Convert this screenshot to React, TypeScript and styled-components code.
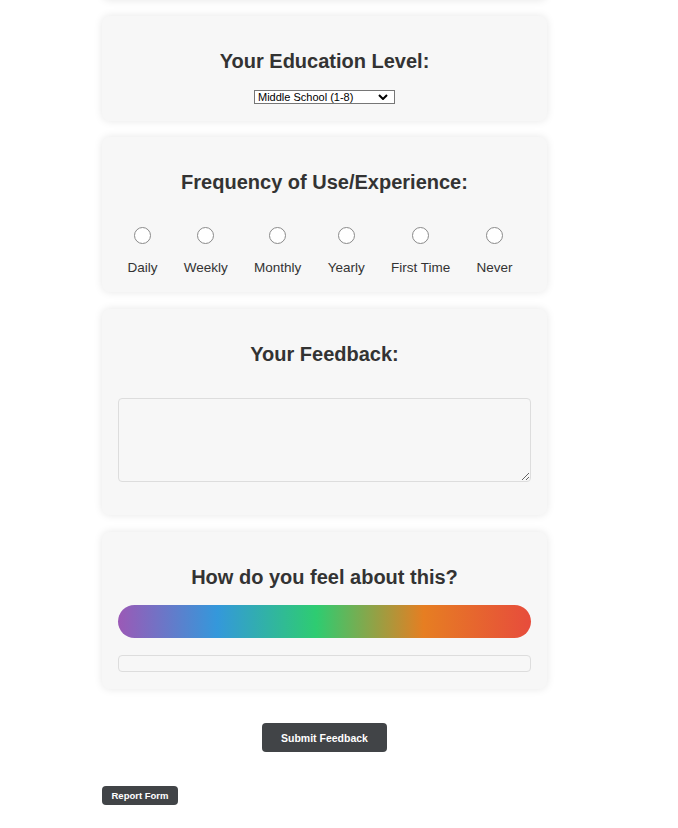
import React from "react";
import styled, { createGlobalStyle } from "styled-components";

const Global = createGlobalStyle`
  html, body { margin: 0; padding: 0; background: #ffffff; }
  body { font-family: "Liberation Sans", Arial, sans-serif; color: #333; }
`;

const Page = styled.div`
  width: 445px;
  margin-left: 102px;
  display: flex;
  flex-direction: column;
`;

const Card = styled.section<{ $pb?: number; $mb?: number }>`
  background: #f7f7f7;
  border-radius: 8px;
  box-shadow: 0 0 8px rgba(0, 0, 0, 0.1);
  padding: 20px 16px ${(p) => p.$pb ?? 17}px;
  margin-bottom: ${(p) => p.$mb ?? 16}px;
  display: flex;
  flex-direction: column;
  align-items: center;
`;

const HiddenCard = styled(Card)`
  height: 60px;
  margin-top: -60px;
  padding: 0;
`;

const Title = styled.h2<{ $mb: number }>`
  margin: 14px 0 ${(p) => p.$mb}px;
  font-size: 20px;
  line-height: 23px;
  font-weight: bold;
  color: #333;
  text-align: center;
`;

const SelectWrap = styled.div`
  position: relative;
  width: 141px;
  height: 14px;
`;

const Select = styled.select`
  width: 141px;
  height: 14px;
  font-family: "Liberation Sans", Arial, sans-serif;
  font-size: 11px;
  padding: 0 0 0 3px;
  border: 1px solid #767676;
  border-radius: 0;
  background: #fff;
  color: #000;
  box-sizing: border-box;
  line-height: 12px;
  appearance: none;
  display: block;
`;

const Chevron = styled.svg`
  position: absolute;
  right: 7px;
  top: 4px;
  pointer-events: none;
`;

const Options = styled.div`
  display: flex;
  gap: 26.3px;
  justify-content: center;
  margin-left: -9px;
`;

const Option = styled.label`
  display: flex;
  flex-direction: column;
  align-items: center;
  gap: 16px;
  font-size: 13.5px;
  line-height: 16px;
  color: #333;
`;

const Radio = styled.input.attrs({ type: "radio" })`
  width: 17px;
  height: 17px;
  margin: 0;
  appearance: none;
  border: 1px solid #8a8a8a;
  border-radius: 50%;
  background: #fff;
  box-sizing: border-box;
`;

const TextArea = styled.textarea`
  width: 413px;
  height: 84px;
  box-sizing: border-box;
  border: 1px solid #ddd;
  border-radius: 4px;
  background: #f7f7f7;
  align-self: center;
  margin-top: 8px;
  resize: vertical;
`;

const Gradient = styled.div`
  width: 413px;
  height: 33px;
  border-radius: 17px;
  background: linear-gradient(
    to right,
    #9b59b6 0%,
    #3498db 24%,
    #2ecc71 48%,
    #e67e22 74%,
    #e74c3c 100%
  );
`;

const EmptyBox = styled.div`
  width: 413px;
  height: 17px;
  box-sizing: border-box;
  border: 1px solid #ddd;
  border-radius: 4px;
  margin-top: 17px;
`;

const Actions = styled.div`
  display: flex;
  justify-content: center;
  margin-top: 18px;
`;

const DarkButton = styled.button<{ $small?: boolean }>`
  background: #414447;
  color: #fff;
  border: none;
  border-radius: 4px;
  font-family: "Liberation Sans", Arial, sans-serif;
  font-weight: bold;
  font-size: ${(p) => (p.$small ? 9.5 : 10.5)}px;
  height: ${(p) => (p.$small ? 19 : 29)}px;
  width: ${(p) => (p.$small ? 76 : 125)}px;
  padding: 0;
  cursor: pointer;
`;

const ReportRow = styled.div`
  display: flex;
  margin-top: 34px;
  padding-bottom: 20px;
`;

const freqs = ["Daily", "Weekly", "Monthly", "Yearly", "First Time", "Never"];

export default function App() {
  return (
    <>
      <Global />
      <Page>
        <HiddenCard />
        <Card $pb={17}>
          <Title $mb={17}>Your Education Level:</Title>
          <SelectWrap>
            <Select defaultValue="middle">
              <option value="elementary">Elementary</option>
              <option value="middle">Middle School (1-8)</option>
              <option value="high">High School</option>
              <option value="college">College</option>
            </Select>
            <Chevron width="10" height="6" viewBox="0 0 10 6">
              <path d="M1 1 L5 5 L9 1" fill="none" stroke="#000" strokeWidth="2" />
            </Chevron>
          </SelectWrap>
        </Card>
        <Card $pb={16} $mb={17}>
          <Title $mb={33}>Frequency of Use/Experience:</Title>
          <Options>
            {freqs.map((f) => (
              <Option key={f}>
                <Radio name="freq" value={f} />
                {f}
              </Option>
            ))}
          </Options>
        </Card>
        <Card $pb={33} $mb={17}>
          <Title $mb={24}>Your Feedback:</Title>
          <TextArea />
        </Card>
        <Card $pb={17}>
          <Title $mb={16}>How do you feel about this?</Title>
          <Gradient />
          <EmptyBox />
        </Card>
        <Actions>
          <DarkButton>Submit Feedback</DarkButton>
        </Actions>
        <ReportRow>
          <DarkButton $small>Report Form</DarkButton>
        </ReportRow>
      </Page>
    </>
  );
}
